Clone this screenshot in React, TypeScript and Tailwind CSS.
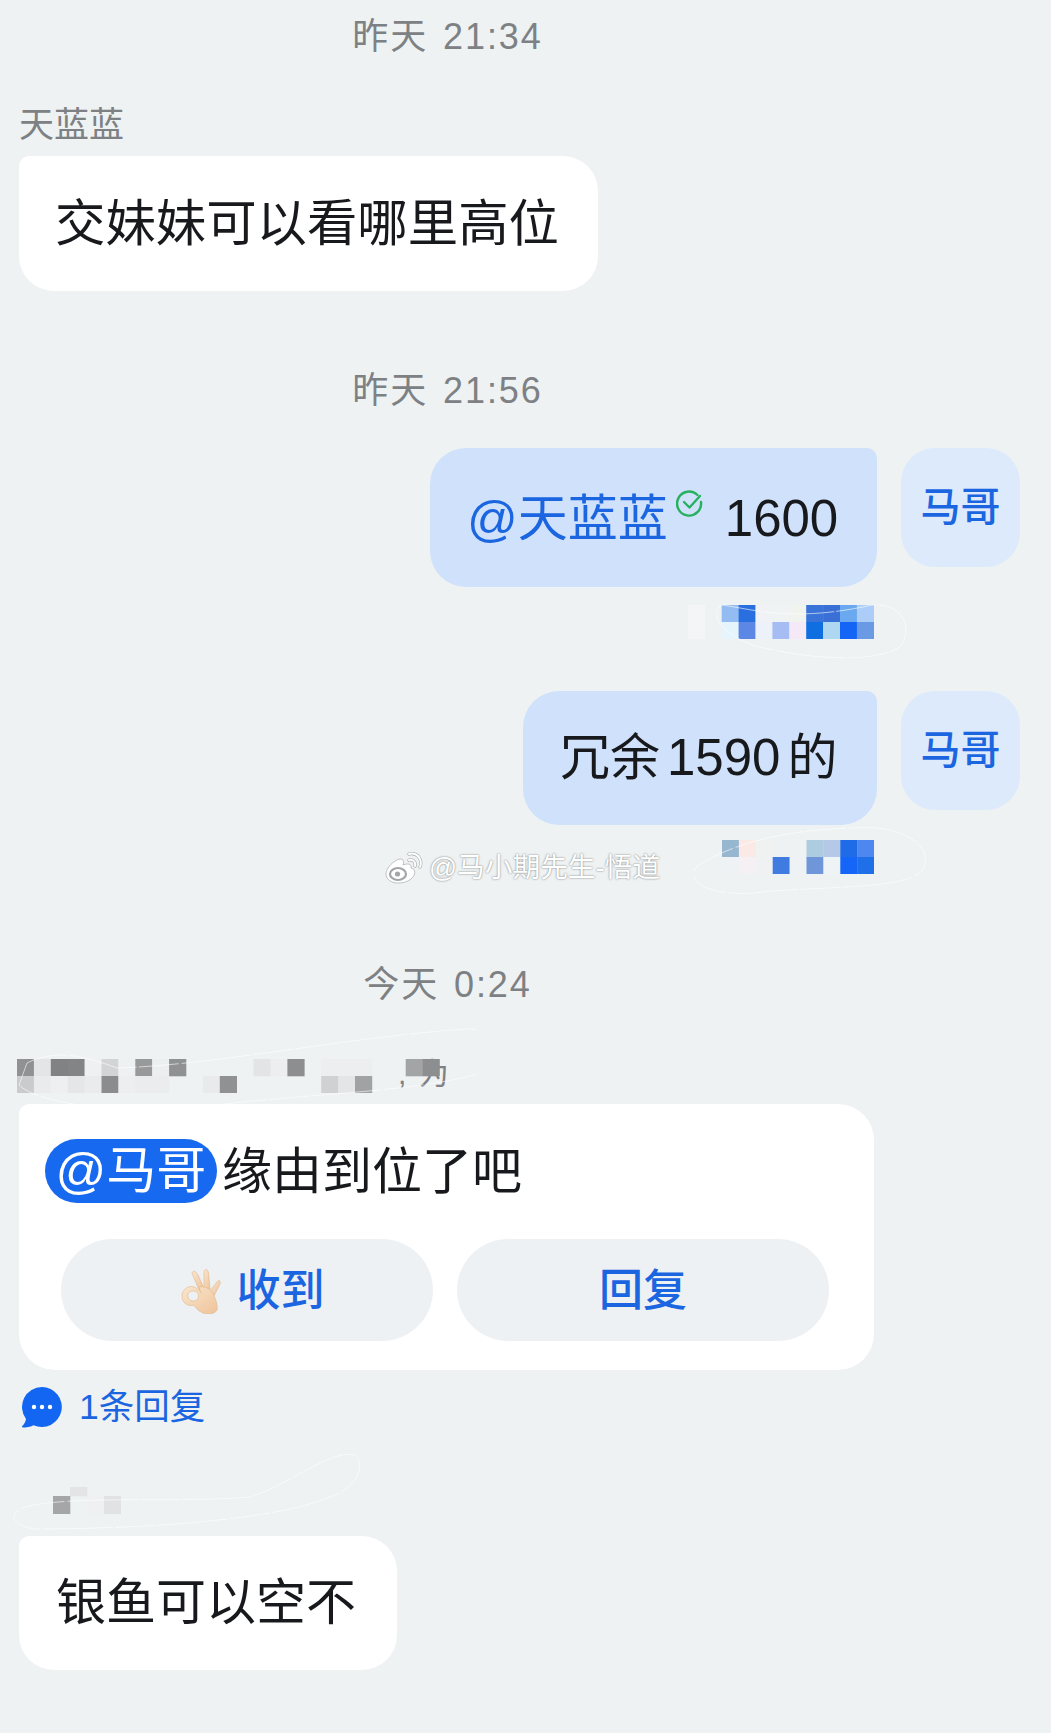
import React from "react";

type Cell = [number, number, string];

function Mosaic({ cells, cols, rows, w = 16.9, h = 17 }: { cells: Cell[]; cols: number; rows: number; w?: number; h?: number }) {
  return (
    <svg width={cols * w} height={rows * h} className="block relative z-10">
      {cells.map(([c, r, f], i) => (
        <rect key={i} x={c * w} y={r * h} width={w + 0.3} height={h + 0.3} fill={f} />
      ))}
    </svg>
  );
}

function Scribble({ d, className }: { d: string; className: string }) {
  return (
    <svg className={"absolute pointer-events-none z-20 " + className} width="460" height="90" viewBox="0 0 460 90" fill="none">
      <path d={d} stroke="#ffffff" strokeOpacity="0.6" strokeWidth="1" strokeDasharray="40 3 70 2" />
    </svg>
  );
}

const m2: Cell[] = [
  [1, 0, "#f3f5f7"], [1, 1, "#f3f5f7"],
  [3, 0, "#93bdf2"], [4, 0, "#2a6fdf"], [5, 0, "#f0f2f6"], [6, 0, "#f0f3f3"], [7, 0, "#f0f3ee"], [8, 0, "#3a74d8"], [9, 0, "#3a70d6"], [10, 0, "#6aa9f0"], [11, 0, "#abcdf7"],
  [3, 1, "#e6f4fc"], [4, 1, "#5d87e4"], [5, 1, "#edf1fa"], [6, 1, "#a5bdf2"], [7, 1, "#f5e9f8"], [8, 1, "#0f6fe0"], [9, 1, "#aed8f2"], [10, 1, "#1464f6"], [11, 1, "#6b9ae4"],
];
const m3: Cell[] = [
  [0, 0, "#97b6cf"], [1, 0, "#fbe9e6"], [2, 0, "#f0f2f2"], [4, 0, "#eef2f2"], [5, 0, "#aecce0"], [6, 0, "#b6c8e8"], [7, 0, "#1f6be8"], [8, 0, "#4d88f0"],
  [0, 1, "#eef2f5"], [1, 1, "#f5f0f3"], [2, 1, "#f0f1f3"], [3, 1, "#3f7be0"], [4, 1, "#eef2f4"], [5, 1, "#6f96d8"], [6, 1, "#eef3f6"], [7, 1, "#1565f8"], [8, 1, "#1f70e8"],
];
const m4: Cell[] = [
  [0, 0, "#8f9193"], [1, 0, "#e3e5e7"], [2, 0, "#808284"], [3, 0, "#828486"], [4, 0, "#eef0f2"], [5, 0, "#d2d4d6"], [6, 0, "#eef1f3"], [7, 0, "#98999b"], [8, 0, "#eceff1"], [9, 0, "#8f9193"], [14, 0, "#e2e4e6"], [15, 0, "#eceef0"], [16, 0, "#8c8e90"], [18, 0, "#eceef0"], [19, 0, "#eceef0"], [20, 0, "#eceef0"], [23, 0, "#a2a4a6"], [24, 0, "#8c8e90"],
  [0, 1, "#c9cbcd"], [1, 1, "#e9ebed"], [2, 1, "#edeff1"], [3, 1, "#e4e6e8"], [4, 1, "#e9ebed"], [5, 1, "#8a8c8e"], [6, 1, "#eceef0"], [7, 1, "#eaecee"], [8, 1, "#eaecee"], [11, 1, "#e8eaec"], [12, 1, "#8f9193"], [18, 1, "#cfd1d3"], [19, 1, "#e3e5e7"], [20, 1, "#a0a2a4"],
];
const m5: Cell[] = [
  [3, 0, "#e2e4e6"],
  [2, 1, "#a4a6a8"], [2, 2, "#a4a6a8"], [4, 1, "#eef0f2"], [4, 2, "#eef0f2"], [5, 1, "#e0e2e4"], [5, 2, "#e0e2e4"],
];

function Time({ children }: { children: React.ReactNode }) {
  return <div className="w-[857px] h-10 pt-[2px] flex items-center justify-center text-[36px] leading-10 tracking-[1.9px] [word-spacing:3px] text-[#7e8184]">{children}</div>;
}

function Avatar() {
  return (
    <div className="w-[119px] h-[119px] shrink-0 rounded-[34px] bg-[#dceafc] text-[#1b66e0] text-[40px] leading-[118px] font-medium text-center">马哥</div>
  );
}

function OkHand() {
  return (
    <svg width="42" height="46" viewBox="10 6 42 46" className="shrink-0">
      <defs>
        <linearGradient id="skin" x1="0" y1="0" x2="1" y2="1">
          <stop offset="0" stopColor="#fae6ce" />
          <stop offset="1" stopColor="#eec39a" />
        </linearGradient>
      </defs>
      <g fill="url(#skin)" stroke="#dfb588" strokeWidth="0.6">
        <path d="M22 11 C23 8 26 9 28 13 L34 26 L29 28 Z" />
        <path d="M34 10 C35 6 38 7 38.5 11 L40 27 L34 27 Z" />
        <path d="M47 20 C49 17 51 19 50 22 L44 34 L39 30 Z" />
        <path
          fillRule="evenodd"
          d="M29 25 C34 24 40 26 43 31 C46 38 48 44 47 48 C45 52 38 53 33 51 C28 49 25 45 24 43 C18 45 12 41 12 34 C12 28 18 23 24 25 C27 26 29 28 31 31 Z M23 29 C19 29 17 32 18 35 C19 39 24 40 27 38 C29 36 29 32 27 30 C26 29 24 29 23 29 Z"
        />
      </g>
    </svg>
  );
}

function Check() {
  return (
    <svg width="28" height="28" viewBox="0 0 28 28" fill="none" stroke="#27b15f" strokeWidth="2.4" strokeLinecap="round" strokeLinejoin="round" className="mb-[30px] mx-[8px]">
      <path d="M21.5 5 A12 12 0 1 0 25 12" />
      <path d="M8 12 L13.5 17.5 L24 6" />
    </svg>
  );
}

function WeiboIcon() {
  return (
    <svg width="38" height="32" viewBox="0 0 38 32" fill="none">
      <path fill="#ffffff" stroke="#8b8d8f" strokeOpacity="0.5" d="M13 31 C6 31 1 27 1 22 C1 16 9 8 15 7 C19 7 19 10 18 13 C23 11 27 12 26 16 C31 17 31 23 26 27 C22 30 18 31 13 31 Z" />
      <ellipse cx="13" cy="22" rx="8" ry="6" fill="#ffffff" stroke="#a3a5a7" strokeWidth="2.2" />
      <circle cx="12.5" cy="22" r="2.6" fill="#a3a5a7" />
      <path d="M24 8 C28 7 31 10 30 14 M24 2 C32 0 38 7 35 15" stroke="#a8aaac" strokeWidth="3.2" strokeLinecap="round" />
      <path d="M24 8 C28 7 31 10 30 14 M24 2 C32 0 38 7 35 15" stroke="#ffffff" strokeWidth="2" strokeLinecap="round" />
    </svg>
  );
}

function ReplyIcon() {
  return (
    <svg width="42" height="42" viewBox="0 0 42 42">
      <path fill="#1266f1" d="M21 1 A20 20 0 1 1 12.5 39.2 C9 41 5 41.6 2 41.6 C1 41.6 .7 40.6 1.3 40 C3.4 38 4.6 35.5 5 33 A20 20 0 0 1 21 1 Z" />
      <circle cx="13" cy="21" r="2.2" fill="#fff" />
      <circle cx="21" cy="21" r="2.2" fill="#fff" />
      <circle cx="29" cy="21" r="2.2" fill="#fff" />
    </svg>
  );
}

export default function App() {
  return (
    <div
      className="relative w-[1051px] h-[1733px] overflow-hidden bg-[#eef2f3] pl-[19px] pr-[31px] pt-4 text-[#17191c] text-[50px] leading-[60px]"
      style={{ fontFamily: '"Liberation Sans", "Noto Sans CJK SC", sans-serif' }}
    >
      <Time>昨天 21:34</Time>

      <div className="mt-[49px] h-10 text-[35px] leading-10 text-[#7e8184]">天蓝蓝</div>
      <div className="mt-[11px] w-[579px] h-[135px] rounded-[35px] rounded-tl-[10px] bg-white pl-[36px] text-[50.4px] flex items-center whitespace-nowrap">交妹妹可以看哪里高位</div>

      <div className="mt-[79px]"><Time>昨天 21:56</Time></div>

      <div className="mt-[38px] flex justify-end gap-6">
        <div className="h-[139px] w-[447px] rounded-[36px] rounded-tr-[10px] bg-[#d0e2fb] pl-[37px] pt-[2px] flex items-center">
          <span className="text-[#1b66e0]">@天蓝蓝</span>
          <Check />
          <span className="ml-[13px] text-[51px]">1600</span>
        </div>
        <Avatar />
      </div>
      <div className="relative mt-[18px] h-[34px] flex justify-end pr-[146px]">
        <Mosaic cells={m2} cols={12} rows={2} />
        <Scribble className="right-[88px] top-[-22px]" d="M250 22 C280 26 320 40 400 22 C430 20 440 42 430 62 C410 80 340 78 280 62 C250 50 235 30 250 22 Z" />
      </div>

      <div className="mt-[52px] flex justify-end gap-6">
        <div className="h-[134px] w-[354px] rounded-[36px] rounded-tr-[10px] bg-[#d0e2fb] pl-[37px] flex items-center">
          冗余<span className="mx-[7px] text-[51px]">1590</span>的
        </div>
        <Avatar />
      </div>
      <div className="relative mt-[15px] h-[35px] flex justify-end pr-[146px]">
        <Mosaic cells={m3} cols={9} rows={2} />
        <Scribble className="right-[78px] top-[-24px]" d="M215 50 C250 28 300 14 370 12 C420 8 455 30 440 55 C420 74 340 70 280 76 C240 82 200 70 215 50 Z" />
      </div>

      {/* watermark */}
      <div className="absolute left-[385px] top-[852px] z-20 flex items-center gap-[6px] text-[27.7px] leading-8 text-white [text-shadow:0_0_2px_rgba(0,0,0,0.55)]">
        <WeiboIcon />
        <span>@马小期先生-悟道</span>
      </div>

      <div className="mt-[89px] [word-spacing:4px]"><Time>今天 0:24</Time></div>

      <div className="relative mt-[55px] -ml-[2px] h-[35px]">
        <span className="absolute left-[381px] top-[-5px] text-[30px] leading-10 tracking-[2px] text-[#7e8184]">, 为</span>
        <Mosaic cells={m4} cols={25} rows={2} />
        <Scribble className="left-0 top-[-36px]" d="M10 40 C40 25 70 34 100 45 C200 42 330 14 450 6 C480 6 490 30 470 48 C400 72 260 70 160 88 C100 90 20 80 2 62 Z" />
      </div>

      <div className="mt-[10px] w-[855px] h-[266px] rounded-[36px] rounded-tl-[10px] bg-white pt-[30px] pl-[26px]">
        <div className="flex items-center h-[76px]">
          <span className="h-16 w-[172px] -mt-[2px] rounded-full bg-[#1769f0] text-white flex items-center justify-center">@马哥</span>
          <span className="ml-[5px]">缘由到位了吧</span>
        </div>
        <div className="mt-[29px] ml-4 flex gap-6">
          <div className="w-[372px] h-[102px] rounded-full bg-[#eef1f4] flex items-center justify-center gap-[15px] text-[44px] font-medium text-[#1b66e0] pt-[2px] pl-[10px]">
            <OkHand />
            收到
          </div>
          <div className="w-[372px] h-[102px] rounded-full bg-[#eef1f4] flex items-center justify-center text-[44px] font-medium text-[#1b66e0] pt-[2px]">回复</div>
        </div>
      </div>

      <div className="mt-4 h-[42px] flex items-center gap-4 text-[35.5px] text-[#1b66e0] pl-[2px]">
        <ReplyIcon />
        <span>1条回复</span>
      </div>

      <div className="relative mt-[59px] h-[27px]">
        <Mosaic cells={m5} cols={6} rows={3} w={17} h={9} />
        <Scribble className="left-[-19px] top-[-40px]" d="M25 60 C70 48 180 56 250 50 C290 38 330 2 355 8 C365 16 360 40 330 50 C280 72 150 82 35 82 C10 78 8 66 25 60 Z" />
      </div>
      <div className="mt-[22px] w-[378px] h-[134px] rounded-[35px] rounded-tl-[10px] bg-white pl-[37px] flex items-center">银鱼可以空不</div>
    </div>
  );
}
